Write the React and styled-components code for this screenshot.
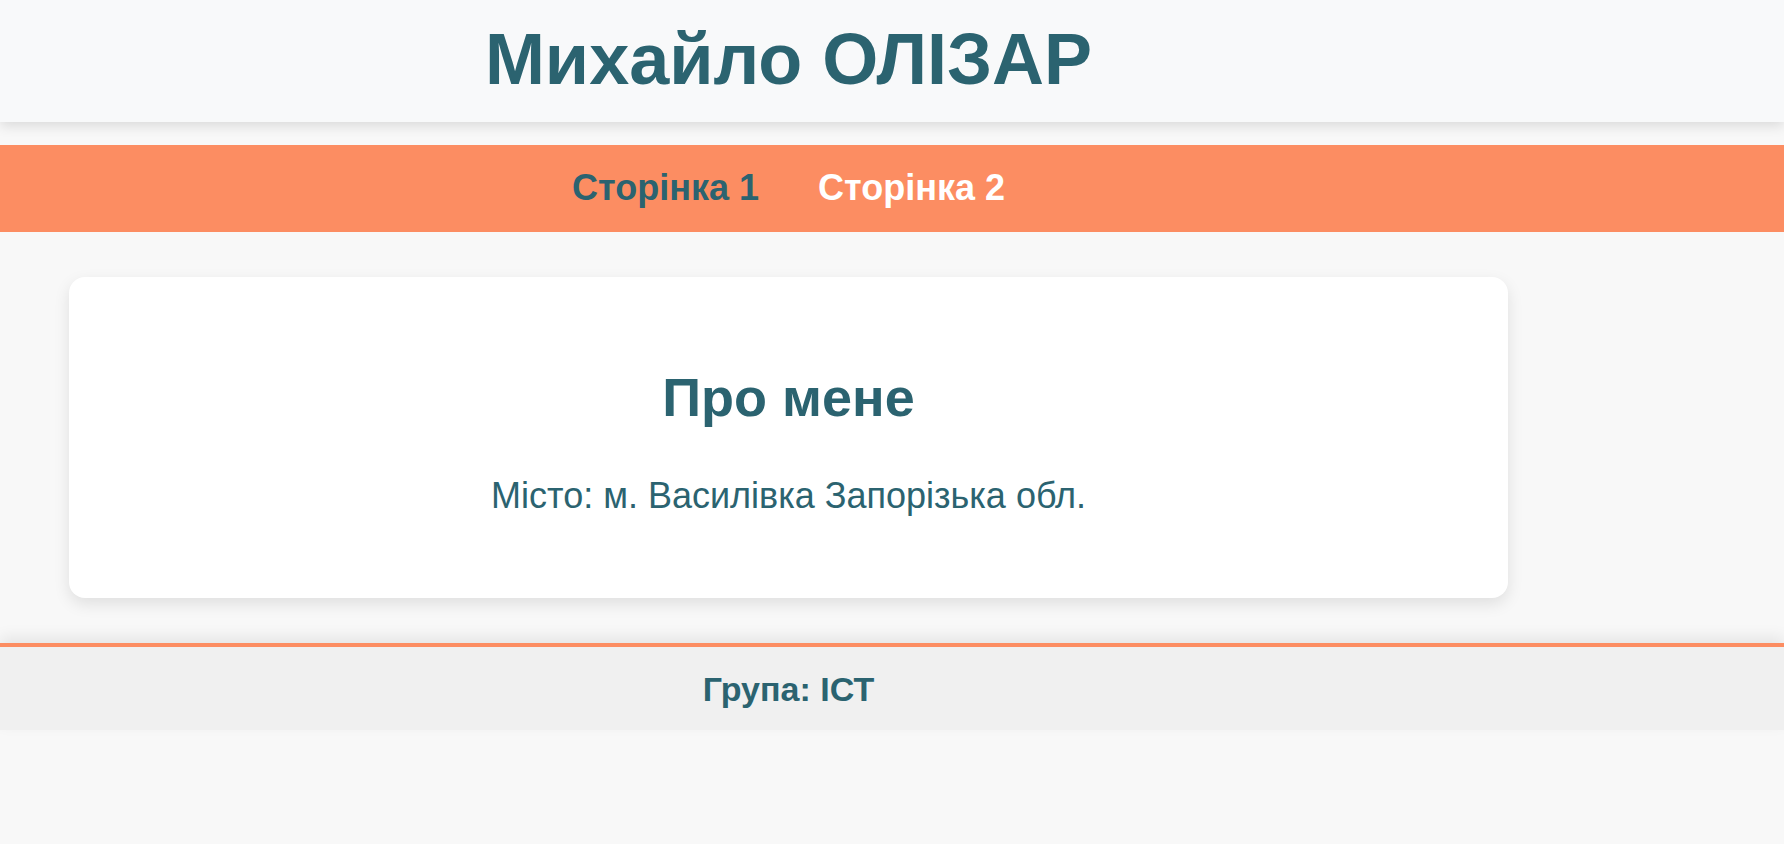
import React from 'react';
import styled, { createGlobalStyle } from 'styled-components';

const GlobalStyle = createGlobalStyle`
  *, *::before, *::after {
    box-sizing: border-box;
  }
  body {
    margin: 0;
    background: #f8f8f8;
    font-family: 'Liberation Sans', Arial, sans-serif;
    color: #2b6370;
  }
`;

const Page = styled.div`
  display: flex;
  flex-direction: column;
  min-height: 100vh;
`;

const Header = styled.header`
  background: #f8f9fa;
  padding: 18px 0 22px;
  box-shadow: 0 4px 12px rgba(0, 0, 0, 0.12);
  position: relative;
`;

const Column = styled.div`
  max-width: 1577px;
  text-align: center;
`;

const Title = styled.h1`
  margin: 0;
  font-size: 72px;
  font-weight: bold;
  color: #2b6370;
`;

const Nav = styled.nav`
  margin-top: 23px;
  background: #fc8d62;
  padding: 23px 0 24px;
`;

const Links = styled(Column)`
  display: flex;
  justify-content: center;
  gap: 59px;
`;

const NavLink = styled.a`
  font-size: 36px;
  line-height: 40px;
  font-weight: bold;
  text-decoration: none;
  color: ${p => (p.$active ? '#2b6370' : '#ffffff')};
  cursor: pointer;
`;

const Main = styled(Column)`
  padding: 45px 69px;
`;

const Card = styled.section`
  background: #ffffff;
  border-radius: 16px;
  box-shadow: 0 6px 16px rgba(0, 0, 0, 0.1);
  padding: 89px 40px 81px;
`;

const CardTitle = styled.h2`
  margin: 0 0 47px;
  font-size: 54px;
  font-weight: bold;
`;

const CardText = styled.p`
  margin: 0;
  font-size: 36px;
`;

const Footer = styled.footer`
  background: #f0f0f0;
  border-top: 4px solid #fc8d62;
  padding: 23px 0 21px;
  box-shadow: 0 -6px 14px rgba(0, 0, 0, 0.08);
`;

const FooterText = styled.p`
  margin: 0;
  font-size: 34px;
  font-weight: bold;
`;

export default function App() {
  return (
    <Page>
      <GlobalStyle />
      <Header>
        <Column>
          <Title>Михайло ОЛІЗАР</Title>
        </Column>
      </Header>
      <Nav>
        <Links>
          <NavLink $active>Сторінка 1</NavLink>
          <NavLink>Сторінка 2</NavLink>
        </Links>
      </Nav>
      <Main>
        <Card>
          <CardTitle>Про мене</CardTitle>
          <CardText>Місто: м. Василівка Запорізька обл.</CardText>
        </Card>
      </Main>
      <Footer>
        <Column>
          <FooterText>Група: ІСТ</FooterText>
        </Column>
      </Footer>
    </Page>
  );
}
